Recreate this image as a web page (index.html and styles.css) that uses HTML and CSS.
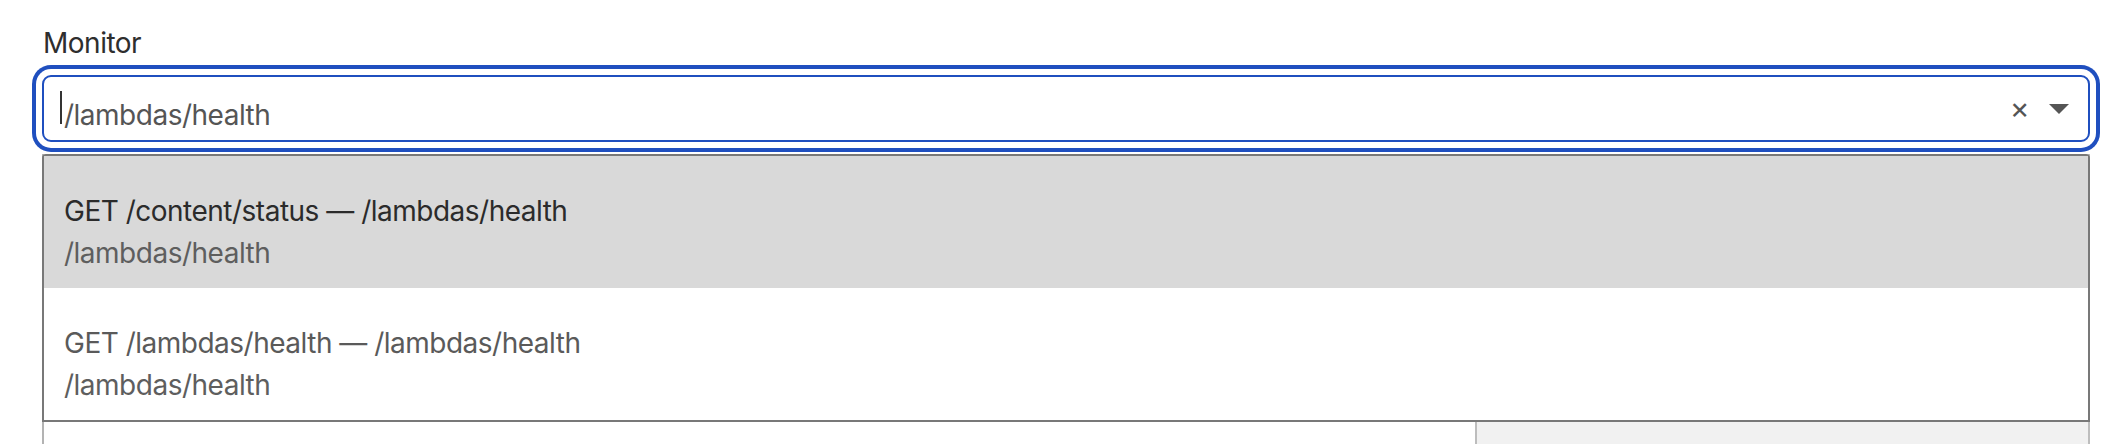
FILE: index.html
```html
<!DOCTYPE html>
<html lang="en">
<head>
<meta charset="utf-8">
<title>Monitor select</title>
<link rel="stylesheet" href="styles.css">
</head>
<body>
<div class="field">
  <label class="label">Monitor</label>
  <div class="combo">
    <div class="control">
      <span class="caret"></span><span class="value">/lambdas/health</span>
      <div class="indicators">
        <span class="clear">×</span>
        <span class="arrow"></span>
      </div>
    </div>
    <ul class="menu">
      <li class="option active">
        <div class="opt-title">GET /content/status — /lambdas/health</div>
        <div class="opt-sub">/lambdas/health</div>
      </li>
      <li class="option">
        <div class="opt-title">GET /lambdas/health — /lambdas/health</div>
        <div class="opt-sub">/lambdas/health</div>
      </li>
    </ul>
  </div>
  <div class="underlay">
    <div class="col-main"></div>
    <div class="col-side"></div>
  </div>
</div>
</body>
</html>
```

FILE: styles.css
```css
html, body {
  margin: 0;
  padding: 0;
  background: #fff;
  overflow: hidden;
}
body {
  font-family: "Inter", "Liberation Sans", sans-serif;
  color: #2b2b2b;
  letter-spacing: -0.5px;
}
.field {
  padding: 23px 22px 0 42px;
}
.label {
  display: block;
  font-size: 28px;
  line-height: 40px;
  color: #2e2e2e;
  padding-left: 1px;
}
.combo {
  position: relative;
  margin-top: 12px;
}
.control {
  box-sizing: border-box;
  height: 67px;
  border: 2px solid #1f4fbf;
  border-radius: 9px;
  box-shadow: 0 0 0 6px #fff, 0 0 0 10px #1f4fbf;
  display: flex;
  align-items: center;
  padding: 0 19px 0 16px;
  background: #fff;
}
.caret {
  width: 2px;
  height: 33px;
  background: #333;
  margin-right: 2px;
  margin-top: -2px;
}
.value {
  flex: 1;
  font-size: 28px;
  line-height: 40px;
  padding-top: 12px;
  color: #555;
}
.indicators {
  display: flex;
  align-items: center;
  gap: 20px;
}
.clear {
  font-size: 30px;
  line-height: 30px;
  color: #555;
  margin-top: -2px;
}
.arrow {
  width: 0;
  height: 0;
  border-left: 10px solid transparent;
  border-right: 10px solid transparent;
  border-top: 10px solid #555;
}
.menu {
  position: absolute;
  top: calc(100% + 12px);
  left: 0;
  right: 0;
  margin: 0;
  padding: 0;
  list-style: none;
  background: #fff;
  border: 2px solid #787878;
  border-radius: 4px 4px 0 0;
  z-index: 10;
}
.option {
  padding: 34px 20px 14px;
  font-size: 28px;
  line-height: 42px;
}
.option.active {
  background: #d9d9d9;
}
.opt-title {
  color: #5a5a5a;
}
.option.active .opt-title {
  color: #2b2b2b;
}
.opt-sub {
  color: #5e5e5e;
}
.underlay {
  margin-top: 12px;
  height: 320px;
  display: flex;
  border-left: 2px solid #b3b3b3;
}
.col-main {
  flex: 1;
}
.col-side {
  width: 611px;
  background: #f1f1f1;
  border-left: 2px solid #bdbdbd;
  border-right: 2px solid #bdbdbd;
}
```
